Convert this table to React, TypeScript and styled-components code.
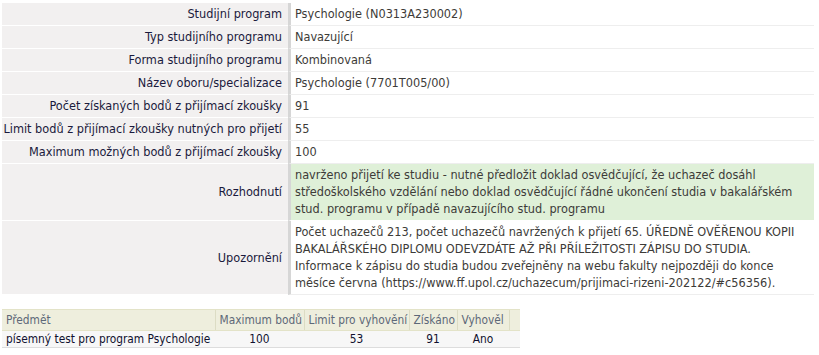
import React from "react";
import styled, { createGlobalStyle } from "styled-components";

const GlobalStyle = createGlobalStyle`
    html, body {
        margin: 0;
        padding: 0;
        background: #ffffff;
    }
    body {
        font-family: "DejaVu Sans Condensed", "DejaVu Sans", sans-serif;
        font-size: 12.6px;
        width: 819px;
        height: 355px;
        overflow: hidden;
    }
`;

interface Row {
    label: string;
    value: string;
    highlight?: boolean;
}

const rows: Row[] = [
    { label: "Studijní program", value: "Psychologie (N0313A230002)" },
    { label: "Typ studijního programu", value: "Navazující" },
    { label: "Forma studijního programu", value: "Kombinovaná" },
    { label: "Název oboru/specializace", value: "Psychologie (7701T005/00)" },
    { label: "Počet získaných bodů z přijímací zkoušky", value: "91" },
    { label: "Limit bodů z přijímací zkoušky nutných pro přijetí", value: "55" },
    { label: "Maximum možných bodů z přijímací zkoušky", value: "100" },
    {
        label: "Rozhodnutí",
        value:
            "navrženo přijetí ke studiu - nutné předložit doklad osvědčující, že uchazeč dosáhl středoškolského vzdělání nebo doklad osvědčující řádné ukončení studia v bakalářském stud. programu v případě navazujícího stud. programu",
        highlight: true,
    },
    {
        label: "Upozornění",
        value:
            "Počet uchazečů 213, počet uchazečů navržených k přijetí 65. ÚŘEDNĚ OVĚŘENOU KOPII BAKALÁŘSKÉHO DIPLOMU ODEVZDÁTE AŽ PŘI PŘÍLEŽITOSTI ZÁPISU DO STUDIA. Informace k zápisu do studia budou zveřejněny na webu fakulty nejpozději do konce měsíce června (https://www.ff.upol.cz/uchazecum/prijimaci-rizeni-202122/#c56356).",
    },
];

const columns = [
    { title: "Předmět", width: 213 },
    { title: "Maximum bodů", width: 89 },
    { title: "Limit pro vyhovění", width: 105 },
    { title: "Získáno", width: 48 },
    { title: "Vyhověl", width: 52 },
    { title: "", width: 11 },
];

const Page = styled.div`
    padding: 2px 0 0 2px;
`;

const DetailGrid = styled.div`
    display: grid;
    grid-template-columns: 286px 526px;
    border-top: 1px solid #ffffff;
`;

const Label = styled.div`
    background: #f2f0f0;
    color: #1a1a3c;
    padding: 2px 6px 3px 4px;
    line-height: 17px;
    border-bottom: 1px solid #ffffff;
    display: flex;
    align-items: center;
    justify-content: flex-end;
    text-align: right;
    white-space: nowrap;
`;

const Value = styled.div<{ $highlight?: boolean }>`
    background: ${(p) => (p.$highlight ? "#dff0d8" : "#ffffff")};
    color: #3d3b38;
    padding: 2px 4px 3px 4px;
    line-height: 17px;
    border-left: 3px solid #d6d6d6;
    border-bottom: 1px solid ${(p) => (p.$highlight ? "#ffffff" : "#eeeeee")};
`;

const Results = styled.table`
    margin-top: 14px;
    border-collapse: collapse;
    table-layout: fixed;
    width: 518px;
    font-size: 11.8px;
`;

const HeadCell = styled.th`
    background: #eeeedd;
    color: #5d6878;
    font-weight: normal;
    text-align: left;
    padding: 1px 3px 1px 4px;
    height: 18px;
    line-height: 17px;
    border-top: 1px solid #e3e3c8;
    border-bottom: 1px solid #e3e3c8;
    border-left: 1px solid #dcdcc4;
    white-space: nowrap;
    overflow: hidden;

    &:first-child {
        border-left: none;
    }
`;

const Cell = styled.td<{ $align?: "left" | "center" }>`
    background: #f7f7f7;
    color: #10102e;
    text-align: ${(p) => p.$align ?? "center"};
    padding: 0 4px;
    height: 16px;
    line-height: 16px;
    border-bottom: 1px solid #dddddd;
    white-space: nowrap;
`;

const App = (): JSX.Element => (
    <Page>
        <GlobalStyle />
        <DetailGrid>
            {rows.map((row) => (
                <React.Fragment key={row.label}>
                    <Label>{row.label}</Label>
                    <Value $highlight={row.highlight}>{row.value}</Value>
                </React.Fragment>
            ))}
        </DetailGrid>
        <Results>
            <colgroup>
                {columns.map((c, i) => (
                    <col key={i} style={{ width: c.width }} />
                ))}
            </colgroup>
            <thead>
                <tr>
                    {columns.map((c, i) => (
                        <HeadCell key={i}>{c.title}</HeadCell>
                    ))}
                </tr>
            </thead>
            <tbody>
                <tr>
                    <Cell $align="left">písemný test pro program Psychologie</Cell>
                    <Cell>100</Cell>
                    <Cell>53</Cell>
                    <Cell>91</Cell>
                    <Cell>Ano</Cell>
                    <Cell />
                </tr>
            </tbody>
        </Results>
    </Page>
);

export default App;
